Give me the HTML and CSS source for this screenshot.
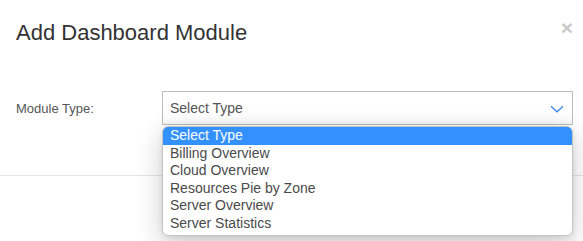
FILE: index.html
```html
<!DOCTYPE html>
<html>
<head>
  <title>Add Dashboard Module</title>
  <link rel="stylesheet" href="styles.css">
</head>
<body>
  <div class="modal">
    <div class="modal-header">
      <h4 class="modal-title">Add Dashboard Module</h4>
      <button class="close" type="button">&times;</button>
    </div>
    <div class="modal-body">
      <div class="form-row">
        <label class="form-label">Module Type:</label>
        <div class="select-wrap">
          <div class="select">
            <span class="select-value">Select Type</span>
            <svg class="chevron" width="14" height="8" viewBox="0 0 14 8">
              <path d="M1 1.2 L7 6.8 L13 1.2" fill="none" stroke="#3b8beb" stroke-width="1.3"/>
            </svg>
          </div>
          <div class="select-list">
            <div class="option selected">Select Type</div>
            <div class="option">Billing Overview</div>
            <div class="option">Cloud Overview</div>
            <div class="option">Resources Pie by Zone</div>
            <div class="option">Server Overview</div>
            <div class="option">Server Statistics</div>
          </div>
        </div>
      </div>
    </div>
    <div class="modal-footer"></div>
  </div>
</body>
</html>
```

FILE: styles.css
```css
body {
  margin: 0;
  background-color: #fff;
  color: #333;
  font-family: "Liberation Sans", Arial, sans-serif;
}

.modal {
  width: 583px;
}

.modal-header {
  display: flex;
  justify-content: space-between;
  align-items: flex-start;
  padding: 17px 10px 0 16px;
}

.modal-title {
  margin: 0;
  font-size: 22px;
  font-weight: normal;
  line-height: 31px;
  color: #333;
}

.close {
  padding: 0;
  margin-top: 0;
  border: none;
  background: none;
  font-family: "Liberation Sans", Arial, sans-serif;
  font-size: 21px;
  font-weight: bold;
  line-height: 21px;
  color: #c9c9c9;
  cursor: pointer;
}

.modal-body {
  padding: 43px 10px 50px 16px;
}

.form-row {
  display: flex;
  align-items: center;
}

.form-label {
  width: 146px;
  font-size: 13px;
  color: #555;
}

.select-wrap {
  position: relative;
  flex: 1;
}

.select {
  display: flex;
  align-items: center;
  justify-content: space-between;
  height: 32px;
  padding: 0 7px;
  border: 1px solid #bdbdbd;
  box-shadow: inset 0 -6px 8px -6px rgba(0, 0, 0, 0.08);
  font-size: 14px;
  color: #555;
}

.chevron {
  margin-top: 1px;
  margin-right: 1px;
}

.select-list {
  position: absolute;
  top: calc(100% + 1px);
  left: 0;
  right: 0;
  padding: 0 0 3px;
  background-color: #fff;
  border: 1px solid #c4c4c4;
  border-radius: 6px;
  box-shadow: 0 8px 28px rgba(0, 0, 0, 0.2), 0 2px 6px rgba(0, 0, 0, 0.08);
  overflow: hidden;
}

.option {
  height: 17.5px;
  line-height: 17px;
  padding: 0 7px;
  font-size: 14px;
  color: #4a4a4a;
}

.option.selected {
  background-color: #3390ff;
  color: #fff;
}

.modal-footer {
  border-top: 1px solid #e5e5e5;
  height: 65px;
}
```
